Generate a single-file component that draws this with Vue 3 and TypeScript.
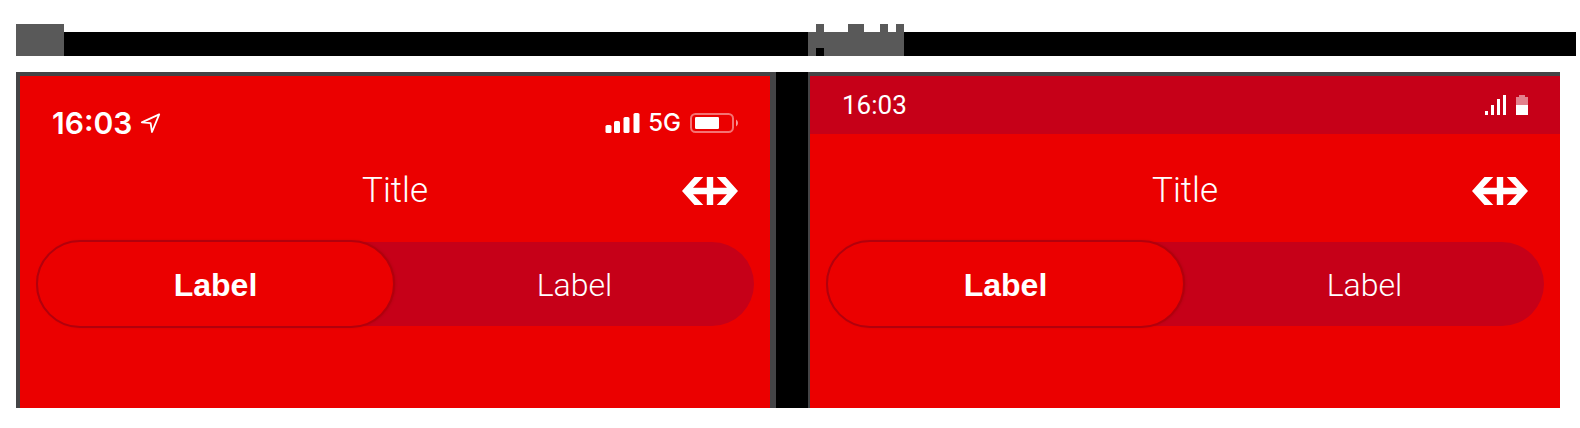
<script setup lang="ts">
import { ref } from 'vue'

type Platform = 'ios' | 'android'

const platforms: Platform[] = ['ios', 'android']
const segments = [0, 1]
const selected = ref<Record<Platform, number>>({ ios: 0, android: 0 })
</script>

<template>
  <main class="page">
    <header class="strip">
      <div class="strip-part">
        <span class="block"></span>
      </div>
      <div class="strip-part">
        <svg class="pixels" width="96" height="32" viewBox="0 0 96 32" aria-hidden="true">
          <path fill="#595959" d="M0 8H8V0H16V8H40V0H56V8H72V0H80V8H88V0H96V32H16V24H8V32H0Z" />
        </svg>
      </div>
    </header>

    <div class="screens">
      <section v-for="platform in platforms" :key="platform" class="screen" :class="platform">
        <div v-if="platform === 'ios'" class="status">
          <span class="clock">16:03</span>
          <svg class="location" width="21" height="21" viewBox="0 0 21 21" aria-hidden="true">
            <path d="M19.2 1.4 1.8 9.4 10.6 10.2 12 19Z" fill="none" stroke="#fff" stroke-width="1.8" stroke-linejoin="round" />
          </svg>
          <span class="spacer"></span>
          <svg width="35" height="20" viewBox="0 0 35 20" fill="#fff" aria-hidden="true">
            <rect x="0.5" y="12" width="6" height="8" rx="1.6" />
            <rect x="9" y="8" width="6" height="12" rx="1.6" />
            <rect x="18.5" y="4" width="6" height="16" rx="1.6" />
            <rect x="28.5" y="0" width="6" height="20" rx="1.6" />
          </svg>
          <span class="network">5G</span>
          <svg width="48" height="20" viewBox="0 0 48 20" aria-hidden="true">
            <rect x="1" y="1" width="42" height="18" rx="4.5" fill="none" stroke="#fff" stroke-opacity="0.45" stroke-width="2" />
            <rect x="5" y="4" width="24" height="12" rx="1.2" fill="#fff" />
            <path d="M46 6.5Q48 7.5 48 10T46 13.5Z" fill="#fff" fill-opacity="0.6" />
          </svg>
        </div>

        <div v-else class="status">
          <span class="clock">16:03</span>
          <span class="spacer"></span>
          <svg width="21" height="20" viewBox="0 0 21 20" fill="#fff" aria-hidden="true">
            <path d="M0 16H3V20H0ZM6 10H9V20H6ZM12 4H15V20H12ZM18 0H21V20H18Z" />
          </svg>
          <svg class="cell" width="12" height="20" viewBox="0 0 12 20" fill="#fff" aria-hidden="true">
            <path d="M0 2H3V0H9V2H12V10H0Z" fill-opacity="0.5" />
            <path d="M0 10H12V20H0Z" />
          </svg>
        </div>

        <div class="titlebar">
          <h1 class="title">Title</h1>
          <svg class="logo" width="56" height="28" viewBox="0 0 56 28" aria-hidden="true">
            <path
              fill="#fff"
              d="M0 14 12.5 0H21.3L11 10.8H24.8V0H31.2V10.8H45L34.7 0H43.5L56 14 43.5 28H34.7L45 17.2H31.2V28H24.8V17.2H11L21.3 28H12.5Z"
            />
          </svg>
        </div>

        <div class="segmented" role="group">
          <button
            v-for="segment in segments"
            :key="segment"
            type="button"
            class="segment"
            :class="{ active: selected[platform] === segment }"
            :aria-pressed="selected[platform] === segment"
            @click="selected[platform] = segment"
          >
            Label
          </button>
        </div>
      </section>
    </div>
  </main>
</template>

<style>
body {
  margin: 0;
  background: #fff;
}
</style>

<style scoped>
.page {
  padding: 24px 4px 20px 16px;
  color: #fff;
}

svg {
  display: block;
  flex: none;
}

.strip {
  display: grid;
  grid-template-columns: calc(50% + 12px) 1fr;
}

.strip-part {
  display: flex;
  height: 32px;
  background: linear-gradient(#fff 8px, #000 8px);
}

.block {
  width: 48px;
  background: #595959;
}

.screens {
  display: flex;
  gap: 32px;
  margin: 16px 16px 0 0;
  background: #000;
}

.screen {
  flex: 1 1 0;
  padding-bottom: 82px;
  border: 0 solid #444446;
  border-top-width: 4px;
  background: #eb0000;
}

.ios {
  border-left-width: 4px;
  border-right-width: 6px;
}

.android {
  border-left-width: 2px;
}

.status {
  display: flex;
  align-items: center;
  padding: 0 32px;
}

.ios .status {
  height: 94px;
}

.android .status {
  height: 58px;
  margin-bottom: 36px;
  background: #c60018;
}

.spacer {
  flex: 1;
}

.ios .clock {
  font: 600 30px/36px Inter, sans-serif;
}

.android .clock {
  font: 400 26px/36px Roboto, sans-serif;
}

.location {
  margin-left: 8px;
}

.network {
  margin: 0 9px 0 8px;
  font: 500 24px/32px Inter, sans-serif;
}

.cell {
  margin-left: 10px;
}

.titlebar {
  display: grid;
  grid-template-columns: 1fr auto 1fr;
  align-items: center;
  height: 40px;
  padding: 0 32px;
}

.title {
  grid-column: 2;
  margin: 0;
  font: 300 35px/42px Roboto, sans-serif;
}

.logo {
  justify-self: end;
}

.segmented {
  display: grid;
  grid-template-columns: 1fr 1fr;
  height: 84px;
  margin: 32px 16px 0;
  border-radius: 42px;
  background: #c60018;
}

.segment {
  box-sizing: border-box;
  padding: 2px 0 0;
  border: 0;
  border-radius: 44px;
  background: none;
  color: #fff;
  font: 300 32px/40px Roboto, sans-serif;
  cursor: pointer;
}

.segment.active {
  margin: -2px 0;
  border: 2px solid #b2000c;
  background: #eb0000;
  box-shadow: 1px 0 3px -1px rgb(120 0 12 / 40%);
  font: 700 32px/40px "Liberation Sans", sans-serif;
}
</style>
